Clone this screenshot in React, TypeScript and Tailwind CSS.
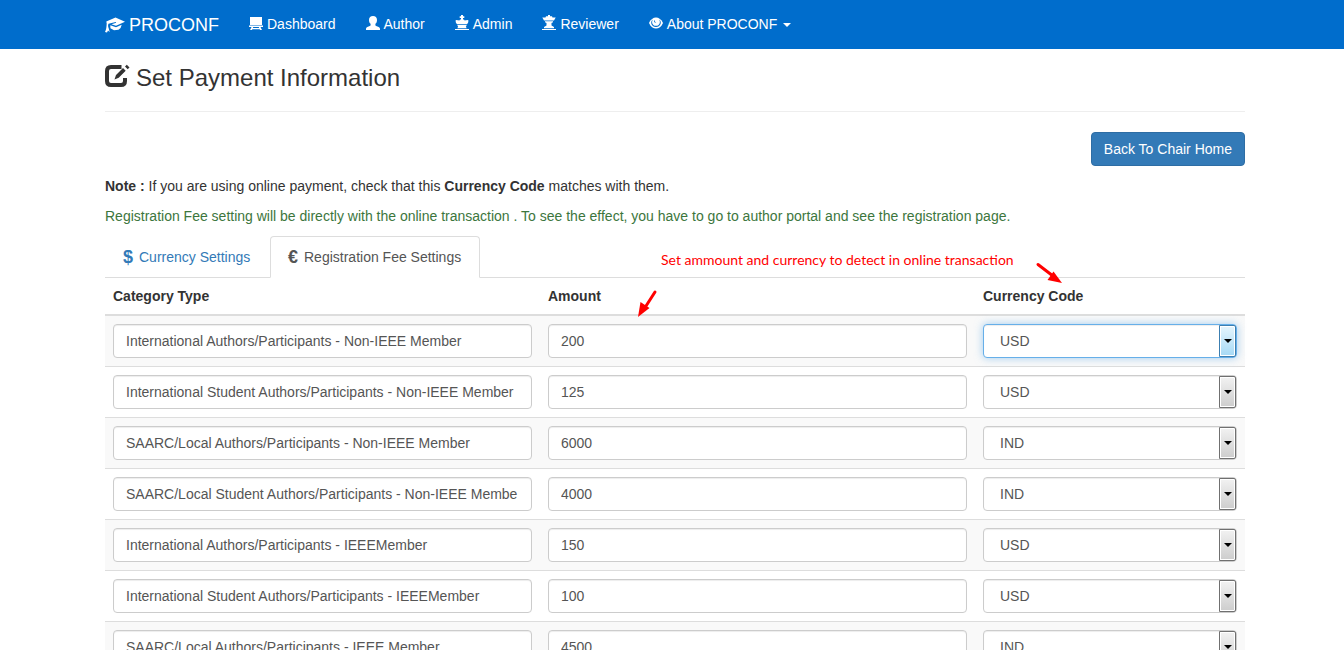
import { useState, type ReactNode } from "react";

type Fee = { category: string; amount: string; currency: string };

const initialFees: Fee[] = [
  { category: "International Authors/Participants - Non-IEEE Member", amount: "200", currency: "USD" },
  { category: "International Student Authors/Participants - Non-IEEE Member", amount: "125", currency: "USD" },
  { category: "SAARC/Local Authors/Participants - Non-IEEE Member", amount: "6000", currency: "IND" },
  { category: "SAARC/Local Student Authors/Participants - Non-IEEE Membe", amount: "4000", currency: "IND" },
  { category: "International Authors/Participants - IEEEMember", amount: "150", currency: "USD" },
  { category: "International Student Authors/Participants - IEEEMember", amount: "100", currency: "USD" },
  { category: "SAARC/Local Authors/Participants - IEEE Member", amount: "4500", currency: "IND" },
];

const inputClass =
  "block h-[34px] w-full rounded border border-[#ccc] bg-white px-3 text-sm text-[#555] shadow-[inset_0_1px_1px_rgba(0,0,0,0.075)] outline-none";

export default function App() {
  const [fees, setFees] = useState(initialFees);
  const [active, setActive] = useState(0);

  function update(index: number, patch: Partial<Fee>) {
    setFees(fees.map((f, i) => (i === index ? { ...f, ...patch } : f)));
  }

  return (
    <div className="h-screen overflow-hidden bg-white font-['Liberation_Sans',Arial,sans-serif] text-sm leading-5 text-[#333]">
      <header className="bg-[#006dcc] pl-[6px] text-white">
        <nav className="mx-auto flex h-[49px] max-w-[1140px] items-center gap-[30px] pb-0.5">
          <a href="#" className="flex items-center gap-1 pt-0.5 text-lg">
            <CapIcon />
            PROCONF
          </a>
          <NavLink icon={<BoardIcon />}>Dashboard</NavLink>
          <NavLink icon={<UserIcon />}>Author</NavLink>
          <NavLink icon={<KingIcon />}>Admin</NavLink>
          <NavLink icon={<QueenIcon />}>Reviewer</NavLink>
          <NavLink icon={<EyeIcon />}>
            About PROCONF
            <span className="ml-1.5 inline-block border-x-4 border-t-4 border-x-transparent border-t-white align-middle" />
          </NavLink>
        </nav>
      </header>

      <div className="pl-[6px]">
        <main className="mx-auto max-w-[1140px]">
          <h1 className="flex items-center gap-[6px] border-b border-[#eee] pt-[15px] pb-[19px] text-2xl leading-[28px]">
            <EditIcon />
            Set Payment Information
          </h1>

          <div className="mt-5 flex justify-end">
            <button className="h-[34px] rounded border border-[#2e6da4] bg-[#337ab7] px-3 text-white">
              Back To Chair Home
            </button>
          </div>

          <p className="mt-2.5">
            <b>Note :</b> If you are using online payment, check that this <b>Currency Code</b> matches with them.
          </p>
          <p className="mt-2.5 text-[#3c763d]">
            Registration Fee setting will be directly with the online transaction . To see the effect, you have to go to
            author portal and see the registration page.
          </p>

          <div className="relative mt-2.5">
            <ul className="flex gap-0.5 border-b border-[#ddd]">
              <li>
                <a
                  href="#"
                  className="-mb-px flex h-[42px] min-w-[163px] items-center gap-1 border border-transparent px-[15px] text-[#337ab7]"
                >
                  <span className="w-3.5 text-center text-lg font-bold">$</span>
                  Currency Settings
                </a>
              </li>
              <li>
                <a
                  href="#"
                  className="-mb-px flex h-[42px] min-w-[210px] items-center gap-1 rounded-t border border-[#ddd] border-b-white bg-white px-[15px] text-[#555]"
                >
                  <span className="w-3.5 text-center text-lg font-bold">€</span>
                  Registration Fee Settings
                </a>
              </li>
            </ul>

            <table className="w-full table-fixed border-separate border-spacing-0">
              <thead>
                <tr className="text-left">
                  <th className="w-[435px] border-b-2 border-[#ddd] p-2">Category Type</th>
                  <th className="w-[435px] border-b-2 border-[#ddd] p-2">Amount</th>
                  <th className="border-b-2 border-[#ddd] p-2">Currency Code</th>
                </tr>
              </thead>
              <tbody>
                {fees.map((fee, i) => (
                  <tr key={i} className="odd:bg-[#f9f9f9]">
                    <td className="border-b border-[#ddd] p-2">
                      <input
                        aria-label="Category Type"
                        value={fee.category}
                        onChange={(e) => update(i, { category: e.target.value })}
                        className={inputClass}
                      />
                    </td>
                    <td className="border-b border-[#ddd] p-2">
                      <input
                        aria-label="Amount"
                        value={fee.amount}
                        onChange={(e) => update(i, { amount: e.target.value })}
                        className={inputClass}
                      />
                    </td>
                    <td className="border-b border-[#ddd] p-2">
                      <CurrencySelect
                        value={fee.currency}
                        active={i === active}
                        onFocus={() => setActive(i)}
                        onChange={(currency) => update(i, { currency })}
                      />
                    </td>
                  </tr>
                ))}
              </tbody>
            </table>

            <p className="pointer-events-none absolute top-[14px] left-[556px] font-['Lato',sans-serif] text-sm whitespace-nowrap text-[#f00]">
              Set ammount and currency to detect in online transaction
            </p>
            <Arrow
              className="absolute top-[27px] left-[932px] h-5 w-6"
              d="M1 1.5 L16 13"
              head="M25 20 L10.500 17 L16.500 8.500 Z"
            />
            <Arrow
              className="absolute top-[54px] left-[533px] h-7 w-[19px]"
              d="M17 2 L8 16"
              head="M0 27 L2.500 12 L11.500 18 Z"
            />
          </div>
        </main>
      </div>
    </div>
  );
}

function NavLink({ icon, children }: { icon: ReactNode; children: ReactNode }) {
  return (
    <a href="#" className="flex items-center gap-1 whitespace-nowrap">
      {icon}
      <span>{children}</span>
    </a>
  );
}

function CurrencySelect({
  value,
  active,
  onFocus,
  onChange,
}: {
  value: string;
  active: boolean;
  onFocus: () => void;
  onChange: (v: string) => void;
}) {
  return (
    <div className="relative">
      <select
        aria-label="Currency Code"
        value={value}
        onFocus={onFocus}
        onChange={(e) => onChange(e.target.value)}
        className={`block h-[34px] w-full appearance-none rounded border bg-white px-4 text-sm text-[#555] outline-none ${
          active
            ? "border-[#66afe9] shadow-[inset_0_1px_1px_rgba(0,0,0,0.075),0_0_8px_rgba(102,175,233,0.6)]"
            : "border-[#ccc] shadow-[inset_0_1px_1px_rgba(0,0,0,0.075)]"
        }`}
      >
        <option>USD</option>
        <option>IND</option>
      </select>
      <span
        className={`pointer-events-none absolute inset-y-px right-px flex w-[17px] items-center justify-center rounded-r-[2px] border shadow-[inset_0_0_0_1px_#fff] ${
          active
            ? "border-[#3c7fb1] bg-linear-to-b from-[#e5f5fd] to-[#a5d9f5]"
            : "border-[#707070] bg-linear-to-b from-[#f2f2f2] to-[#cdcdcd]"
        }`}
      >
        <span className="border-x-4 border-t-4 border-x-transparent border-t-black" />
      </span>
    </div>
  );
}

function Arrow({ className, d, head }: { className: string; d: string; head: string }) {
  return (
    <svg
      className={`pointer-events-none overflow-visible ${className}`}
      fill="none"
      stroke="#f00"
      strokeWidth="3"
      strokeLinecap="round"
    >
      <path d={d} />
      <path d={head} fill="#f00" stroke="none" />
    </svg>
  );
}

function CapIcon() {
  return (
    <svg viewBox="0 0 20 16" className="h-4 w-5" fill="currentColor">
      <path d="M10.500 0.500 L20 4.700 L11 8.800 L6.500 7.200 L11.200 5.700 L10.700 5 L3.500 6.800 C2.900 8.200 3 9.600 3.600 11 L4.700 15 L3 13.600 L2 15.600 L0 15 C1.400 12.500 1.500 9.500 1.700 6.500 L1.300 4.500 Z" />
      <path d="M5.300 8.300 L11 10.300 L16.700 7.700 L15.600 11 L13.500 12.800 L9 13.200 L5.400 11.200 Z" />
    </svg>
  );
}

function BoardIcon() {
  return (
    <svg viewBox="0 0 14 14" className="h-3.5 w-3.5" fill="currentColor">
      <path d="M1 0 H13 V8 H1 Z M0 8.600 H14 V10 H0 Z M2.500 10 H4.200 L3.900 11 H10.100 L9.800 10 H11.500 L13 13 H11.200 L10.600 12.200 H3.400 L2.800 13 H1 Z" />
    </svg>
  );
}

function UserIcon() {
  return (
    <svg viewBox="0 0 14 14" className="mb-0.5 h-3.5 w-3.5" fill="currentColor">
      <path d="M7 0 C9.500 0 11 1.500 11 3.900 C11 5.900 10.300 7 9.400 7.800 V9 C9.400 9.700 10 10 10.800 10.300 C12.700 11.100 14 11.500 14 12.700 V14 H0 V12.700 C0 11.500 1.300 11.100 3.200 10.300 C4 10 4.600 9.700 4.600 9 V7.800 C3.700 7 3 5.900 3 3.900 C3 1.500 4.500 0 7 0 Z" />
    </svg>
  );
}

function KingIcon() {
  return (
    <svg viewBox="0 0 14 16" className="mb-0.5 h-4 w-3.5" fill="currentColor">
      <path d="M6 0 H8 V1.200 H9.300 V3 H8 V4.600 H9 L9.600 5.500 L12.500 5 L13.500 5.500 L13 8 L11.800 9.200 H2.200 L1 8 L0.500 5.500 L1.500 5 L4.400 5.500 L5 4.600 H6 V3 H4.700 V1.200 H6 Z M2.500 10 H11.500 V11 L10.800 11.500 L11.700 13.200 H2.300 L3.200 11.500 L2.500 11 Z M0 14 H14 V15 H0 Z" />
    </svg>
  );
}

function QueenIcon() {
  return (
    <svg viewBox="0 0 14 16" className="mb-0.5 h-4 w-3.5" fill="currentColor">
      <path d="M6 0 H8 V1.200 H10 L10.500 2.500 L13.700 2.600 L12 5.500 H2 L0.300 2.600 L3.500 2.500 L4 1.200 H6 Z M3 6.200 H11 V7.200 L9.500 8 V10.500 L12 12 V13.200 H2 V12 L4.500 10.500 V8 L3 7.200 Z M0 14 H14 V15 H0 Z" />
    </svg>
  );
}

function EyeIcon() {
  return (
    <svg viewBox="0 0 14 12" className="mb-0.5 h-3 w-3.5">
      <path
        d="M0 6 C1.500 2.200 4.300 0.400 7 0.400 S12.500 2.200 14 6 C12.500 9.800 9.700 11.600 7 11.600 S1.500 9.800 0 6 Z"
        fill="currentColor"
      />
      <path
        d="M3.800 2.400 C0.600 5 2.600 9.900 7 9.900 C11.400 9.900 13.400 5 10.200 2.400 C12 6 10 8.800 7 8.800 C4 8.800 2 6 3.800 2.400 Z M5 3.400 Q4.800 6.200 7.300 5.800 Q5.800 5.300 5.900 3.400 Z"
        fill="#006dcc"
      />
    </svg>
  );
}

function EditIcon() {
  return (
    <svg viewBox="0 0 25 24" className="mb-1 h-6 w-[25px]" fill="none" stroke="currentColor">
      <path d="M16.500 3 H6 Q2 3 2 7 V17 Q2 21 6 21 H16 Q20 21 20 17 V14" strokeWidth="4" />
      <path
        d="M9.500 15.500 L11 11 L18 4 L20.700 6.700 L13.700 13.700 Z M20 2.500 L21.800 0.700 L24.500 3.400 L22.700 5.200 Z"
        fill="currentColor"
        stroke="none"
      />
    </svg>
  );
}
